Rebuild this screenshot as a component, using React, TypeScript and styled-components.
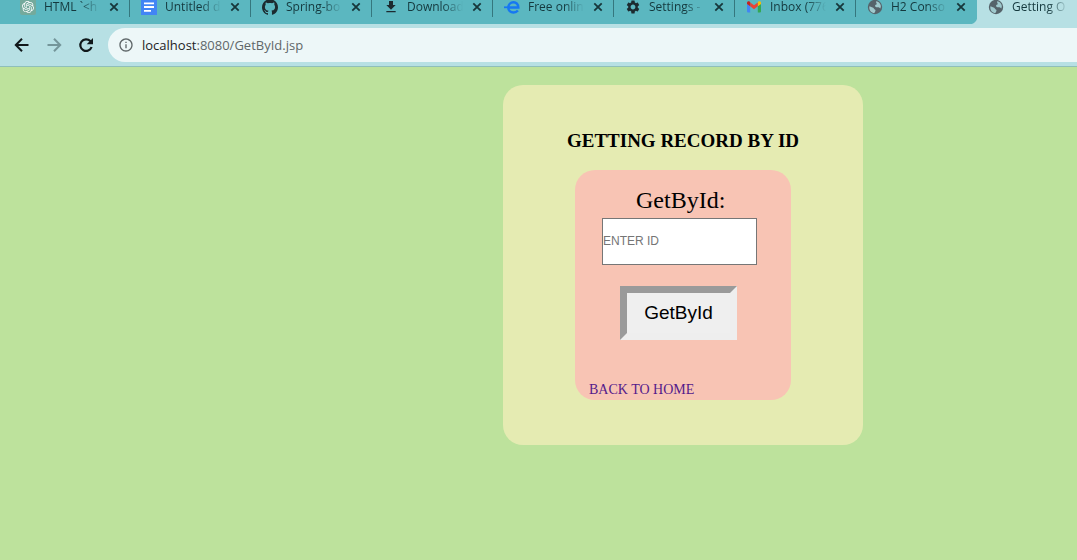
import React from "react";
import styled, { createGlobalStyle } from "styled-components";
import { SiOpenai, SiGithub } from "react-icons/si";
import { MdInfoOutline, MdFileDownload, MdSettings } from "react-icons/md";

const GlobalStyle = createGlobalStyle`
  *, *::before, *::after { box-sizing: border-box; }
  html, body, #root { min-height: 100vh; }
  body {
    margin: 0;
    background: #bde29c;
    font-family: "Liberation Serif", "Times New Roman", serif;
    color: #000;
  }
`;

const ui = `"Open Sans", "Noto Sans", sans-serif`;

const TabStrip = styled.nav`
  display: flex;
  height: 24px;
  padding-left: 9px;
  background: #5bb7c0;
  overflow: hidden;
`;

const Tab = styled.div<{ $active?: boolean; $last?: boolean }>`
  display: flex;
  align-items: flex-start;
  flex: ${(p) => (p.$active ? "1 0 100px" : "0 0 121px")};
  height: 24px;
  padding-left: 11px;
  background: ${(p) => (p.$active ? "#b7e0e4" : p.$last ? "radial-gradient(circle at 0 0, #5bb7c0 8px, #b7e0e4 9px) right bottom / 8px 8px no-repeat" : "none")};
`;

const Favicon = styled.span`
  flex: none;
  width: 16px;
  height: 15px;
  svg { display: block; width: 16px; height: 16px; margin-top: -1px; }
`;

const TabTitle = styled.span`
  flex: none;
  width: 56px;
  height: 16px;
  margin-left: 8px;
  white-space: nowrap;
  font: 12px/14px ${ui};
  color: #14383d;
  mask-image: linear-gradient(to right, #000 36px, transparent 56px);
`;

const CloseButton = styled.button`
  display: block;
  width: 14px;
  height: 14px;
  margin-left: 7px;
  padding: 0;
  border: 0;
  background: none;
  color: #17373b;
  svg { display: block; width: 14px; height: 14px; }
`;

const Divider = styled.span`
  width: 1px;
  height: 17px;
  margin-left: 8px;
  background: #35777e;
`;

const Toolbar = styled.header`
  display: flex;
  align-items: center;
  height: 43px;
  padding: 0 0 1px 12px;
  background: #b7e0e4;
  border-bottom: 1px solid #8fbfba;
`;

const NavButton = styled.button<{ $muted?: boolean }>`
  width: 20px;
  height: 20px;
  margin-right: 12px;
  padding: 0;
  border: 0;
  background: none;
  color: ${(p) => (p.$muted ? "#74969a" : "#10181a")};
  svg { display: block; width: 20px; height: 20px; }
`;

const AddressBar = styled.div`
  display: flex;
  align-items: center;
  flex: 1;
  gap: 8px;
  height: 34px;
  padding-left: 10px;
  border-radius: 17px 0 0 17px;
  background: #edf7f8;
  color: #5f6769;
  font: 13px/20px ${ui};
  svg { width: 16px; height: 16px; }
`;

const Address = styled.span`
  b { font-weight: 400; color: #1d2324; }
`;

const Page = styled.main`
  padding: 18px 0 0 503px;
`;

const Card = styled.section`
  display: flex;
  flex-direction: column;
  align-items: center;
  width: 360px;
  padding: 45px 0;
  border-radius: 20px;
  background: #e5ebb2;
`;

const Title = styled.h1`
  margin: 0 0 18px;
  font-size: 19px;
  line-height: 22px;
`;

const Form = styled.form`
  display: flex;
  flex-direction: column;
  align-items: flex-start;
  width: 216px;
  height: 230px;
  padding: 16px 14px 0;
  border-radius: 20px;
  background: #f8c4b4;
`;

const Label = styled.label`
  margin-left: 47px;
  font-size: 24px;
  line-height: 28px;
`;

const IdInput = styled.input`
  width: 155px;
  height: 47px;
  margin: 4px 0 21px 13px;
  padding: 0 0 2px;
  border: 1px solid #767676;
  border-radius: 0;
  background: #fff;
  font: 12px "Liberation Sans", Arial, sans-serif;
  &::placeholder { color: #757575; opacity: 1; }
`;

const SubmitButton = styled.button`
  width: 117px;
  height: 54px;
  margin: 0 0 42px 31px;
  padding: 0;
  border: 7px solid;
  border-color: #9a9a9a #eee #eee #9a9a9a;
  background: #efefef;
  color: #000;
  font: 19px "Liberation Sans", Arial, sans-serif;
`;

const HomeLink = styled.a`
  color: #551a8b;
  font-size: 14px;
  line-height: 16px;
  text-decoration: none;
`;

const ArrowIcon = ({ forward }: { forward?: boolean }) => (
  <svg viewBox="0 0 20 20" fill="none" stroke="currentColor" strokeWidth="2">
    <path d={forward ? "M3.500 10h12M10 3.800l6.200 6.200-6.200 6.200" : "M16.500 10h-12M10 3.800L3.800 10l6.200 6.200"} />
  </svg>
);

const ReloadIcon = () => (
  <svg viewBox="0 0 20 20">
    <path fill="none" stroke="currentColor" strokeWidth="2.200" d="M15.600 12a5.800 5.800 0 1 1-1.300-5.900l1.200 1.200" />
    <path fill="currentColor" d="M17 3v6.300h-6.300z" />
  </svg>
);

const CloseIcon = () => (
  <svg viewBox="0 0 14 14" stroke="currentColor" strokeWidth="1.800">
    <path d="M3.300 3.300l7.400 7.400M10.700 3.300l-7.400 7.400" />
  </svg>
);

const DocsIcon = () => (
  <svg viewBox="0 0 16 16">
    <path fill="#4285f4" d="M0 0h16v16H0z" />
    <path stroke="#fff" strokeWidth="1.800" d="M3 4.300h10M3 8h10M3 11.900h7" />
  </svg>
);

const EIcon = () => (
  <svg viewBox="0 0 16 16" fill="none" stroke="#1677f2" strokeWidth="2.500">
    <path d="M4.300 8.600h10C14.300 5.200 12.200 3.300 9.500 3.300 6.600 3.300 4.300 5.500 4.300 8.500c0 3 2.200 5 5.200 5 1.800 0 3.300-.7 4.400-2" />
    <path strokeWidth="1.800" d="M0 8.300h5" />
  </svg>
);

const GlobeIcon = () => (
  <svg viewBox="0 0 16 16">
    <circle cx="8" cy="8" r="7.200" fill="#55636a" />
    <path fill="#9fc9cd" d="M2.400 7.200l3.800 1.600c.9.400.7 1.400 1.500 1.700.9.300 1 1 .6 1.800l-.9 1.800C4.500 13.900 1.700 11.300 2.400 7.200zM9.300 2.200c2.300.4 4.200 2.200 4.600 4.700l-.5 2.500c-.9-.2-1-.9-1.900-1.100-1.300-.3-2.700.3-3.300-.8-.5-1 .2-1.700 1.100-2 .9-.4.300-1 .1-1.500-.2-.6-.6-1.200-.1-1.800z" />
  </svg>
);

const GmailIcon = () => (
  <svg viewBox="0 0 16 16">
    <path fill="#4285f4" d="M1 4.800l3.200 2.400v6.300H2.100A1.100 1.100 0 0 1 1 12.400z" />
    <path fill="#34a853" d="M15 4.800l-3.200 2.400v6.300h2.100a1.100 1.100 0 0 0 1.100-1.100z" />
    <path fill="#fbbc04" d="M11.800 3.400v3.900L15 4.900V3.800c0-1.400-1.500-2.100-2.600-1.300z" />
    <path fill="#ea4335" d="M4.200 7.300V3.400L8 6.300l3.800-2.900v3.900L8 10.200z" />
    <path fill="#c5221f" d="M1 3.800v1.100l3.200 2.400V3.400l-.6-.9C2.500 1.700 1 2.400 1 3.800z" />
  </svg>
);

const ChatIcon = styled(SiOpenai)`
  padding: 2px;
  border-radius: 2px;
  background: #74aa9c;
  color: #fff;
`;

const tabs = [
  { title: "HTML `<h", icon: <ChatIcon /> },
  { title: "Untitled d", icon: <DocsIcon /> },
  { title: "Spring-bo", icon: <SiGithub color="#1c2b30" /> },
  { title: "Download", icon: <MdFileDownload color="#1c2b30" /> },
  { title: "Free onlin", icon: <EIcon /> },
  { title: "Settings -", icon: <MdSettings color="#1c2b30" /> },
  { title: "Inbox (776", icon: <GmailIcon /> },
  { title: "H2 Conso", icon: <GlobeIcon /> },
];

export default function App() {
  return (
    <>
      <GlobalStyle />
      <TabStrip>
        {tabs.map((tab, i) => (
          <Tab key={tab.title} $last={i === tabs.length - 1}>
            <Favicon>{tab.icon}</Favicon>
            <TabTitle>{tab.title}</TabTitle>
            <CloseButton aria-label="Close tab"><CloseIcon /></CloseButton>
            {i < tabs.length - 1 && <Divider />}
          </Tab>
        ))}
        <Tab $active>
          <Favicon><GlobeIcon /></Favicon>
          <TabTitle>Getting O</TabTitle>
        </Tab>
      </TabStrip>
      <Toolbar>
        <NavButton aria-label="Back"><ArrowIcon /></NavButton>
        <NavButton aria-label="Forward" $muted><ArrowIcon forward /></NavButton>
        <NavButton aria-label="Reload"><ReloadIcon /></NavButton>
        <AddressBar>
          <MdInfoOutline />
          <Address><b>localhost</b>:8080/GetById.jsp</Address>
        </AddressBar>
      </Toolbar>
      <Page>
        <Card>
          <Title>GETTING RECORD BY ID</Title>
          <Form onSubmit={(e) => e.preventDefault()}>
            <Label htmlFor="record-id">GetById:</Label>
            <IdInput id="record-id" placeholder="ENTER ID" />
            <SubmitButton type="submit">GetById</SubmitButton>
            <HomeLink href="#home">BACK TO HOME</HomeLink>
          </Form>
        </Card>
      </Page>
    </>
  );
}
